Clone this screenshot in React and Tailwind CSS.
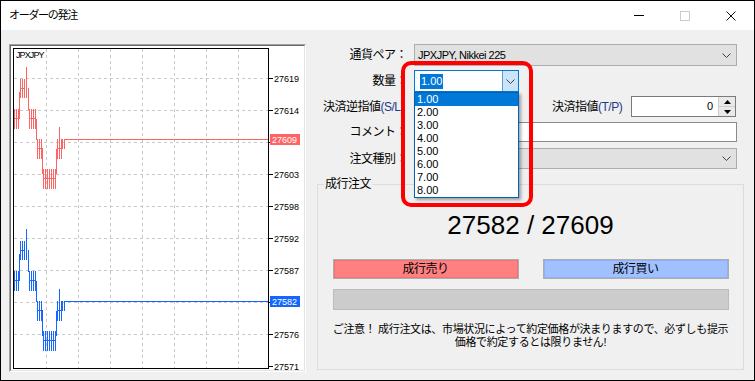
import React from "react";

function buildBars(dy) {
  const d = [];
  const v = (x, y0, y1) => d.push(`M${x + 0.5} ${y0 + dy}V${y1 + dy + 1}`);
  const h = (x0, x1, y) => d.push(`M${x0} ${y + dy + 0.5}H${x1}`);
  const comb = (x0, x1, y0, y1, mid) => {
    for (let x = x0; x <= x1; x += 2) v(x, y0, y1);
    if (mid != null) h(x0, x1 + 1, mid);
  };
  comb(14, 18, 109, 128, 118);
  v(19, 92, 118);
  comb(20, 24, 79, 97, 88);
  v(26, 67, 97);
  v(28, 88, 109);
  comb(29, 35, 109, 128, 118);
  v(36, 119, 139);
  comb(37, 41, 139, 158, 148);
  v(42, 148, 173);
  comb(43, 55, 169, 188, 178);
  v(56, 149, 173);
  comb(57, 61, 139, 158, 148);
  v(59, 127, 148);
  comb(62, 64, 139, 148, null);
  h(64, 269, 139);
  return d.join("");
}

const gridX = [46, 78, 110, 142, 174, 206, 238];
const gridY = [78, 110, 142, 174, 206, 238, 270, 302, 334];
const labels = [
  [78, "27619"],
  [110, "27614"],
  [174, "27603"],
  [206, "27598"],
  [238, "27592"],
  [270, "27587"],
  [334, "27576"],
  [366, "27571"],
];
const ticks = [78, 110, 142, 174, 206, 238, 270, 302, 334, 366];

function Chart() {
  return (
    <svg width="293" height="324" viewBox="11 46 293 324" className="block">
      <rect x="11" y="46" width="293" height="324" fill="#fff" />
      <g stroke="#c8c8c8" strokeDasharray="3 3" shapeRendering="crispEdges">
        {gridX.map((x) => (
          <path key={"gx" + x} d={`M${x + 0.5} 49V368`} />
        ))}
        {gridY.map((y) => (
          <path key={"gy" + y} d={`M14 ${y + 0.5}H268`} />
        ))}
      </g>
      <path d={buildBars(0)} stroke="#ff6464" fill="none" shapeRendering="crispEdges" />
      <path d={buildBars(162)} stroke="#1466ff" fill="none" shapeRendering="crispEdges" />
      <rect x="13.5" y="48.5" width="255" height="320" fill="none" stroke="#000" shapeRendering="crispEdges" />
      <g stroke="#000" shapeRendering="crispEdges">
        {ticks.map((y) => (
          <path key={"t" + y} d={`M269 ${y + 0.5}H273`} />
        ))}
      </g>
      <g fontFamily="'Liberation Sans', sans-serif" fontSize="9" fill="#000">
        {labels.map(([y, t]) => (
          <text key={"l" + y} x="274" y={y + 3.5}>
            {t}
          </text>
        ))}
        <text x="16" y="57.5" letterSpacing="-0.9">
          JPXJPY
        </text>
      </g>
      <rect x="270" y="134" width="30" height="11" fill="#ff6464" />
      <text x="272" y="142.8" fontFamily="'Liberation Sans', sans-serif" fontSize="9" fill="#fff">
        27609
      </text>
      <rect x="270" y="296" width="30" height="11" fill="#1466ff" />
      <text x="272" y="304.8" fontFamily="'Liberation Sans', sans-serif" fontSize="9" fill="#fff">
        27582
      </text>
    </svg>
  );
}

function Chevron() {
  return (
    <svg width="9" height="5" viewBox="0 0 9 5">
      <path d="M0.5 0.5L4.5 4.5L8.5 0.5" fill="none" stroke="#404040" strokeWidth="1" />
    </svg>
  );
}

function Spinner() {
  return (
    <div className="w-[17px] h-full flex flex-col border-l border-[#cfcfcf]">
      <div className="flex-1 flex items-center justify-center bg-[#e9e9e9] border-b border-[#cfcfcf]">
        <svg width="7" height="4" viewBox="0 0 7 4">
          <path d="M0 4L3.5 0L7 4Z" fill="#000" />
        </svg>
      </div>
      <div className="flex-1 flex items-center justify-center bg-[#e9e9e9]">
        <svg width="7" height="4" viewBox="0 0 7 4">
          <path d="M0 0L3.5 4L7 0Z" fill="#000" />
        </svg>
      </div>
    </div>
  );
}

export default function App() {
  const items = ["1.00", "2.00", "3.00", "4.00", "5.00", "6.00", "7.00", "8.00"];
  return (
    <div className="w-[755px] h-[381px] border border-black bg-[#f0f0f0] flex flex-col overflow-hidden font-['Liberation_Sans','Noto_Sans_CJK_JP',sans-serif] text-black">
      {/* Title bar */}
      <div className="h-[29px] shrink-0 bg-white flex items-center">
        <span className="pl-[8px] text-[11px] tracking-[-1.3px] leading-none">オーダーの発注</span>
        <div className="ml-auto flex h-full">
          <div className="w-[46px] flex items-center justify-center">
            <svg width="10" height="1" viewBox="0 0 10 1">
              <path d="M0 0.5H10" stroke="#000" />
            </svg>
          </div>
          <div className="w-[46px] flex items-center justify-center">
            <div className="w-[10px] h-[10px] border border-[#cccccc]" />
          </div>
          <div className="w-[46px] flex items-center justify-center">
            <svg width="10" height="10" viewBox="0 0 10 10">
              <path d="M0.5 0.5L9.5 9.5M9.5 0.5L0.5 9.5" stroke="#111" strokeWidth="1" />
            </svg>
          </div>
        </div>
      </div>

      {/* Body */}
      <div className="flex-1 flex pl-[8px] pt-[14px]">
        {/* Chart panel */}
        <div className="w-[297px] h-[328px] border-t border-l border-[#a0a0a0] border-r-white border-b-white border-r border-b">
          <div className="w-full h-full border-t border-l border-[#696969] border-r border-b border-r-[#e3e3e3] border-b-[#e3e3e3] bg-white">
            <Chart />
          </div>
        </div>

        {/* Form */}
        <div className="relative flex-1 flex flex-col text-[12px]">
          {/* Row 1 */}
          <div className="flex items-center h-[22px]">
            <div className="w-[101px] text-right tracking-[-0.5px] whitespace-nowrap">通貨ペア：</div>
            <div className="ml-[7px] w-[323px] h-[22px] bg-[#e1e1e1] border border-[#adadad] flex items-center pl-[3px] pr-[5px]">
              <span className="text-[11px] tracking-[-0.5px]">JPXJPY, Nikkei 225</span>
              <span className="ml-auto flex">
                <Chevron />
              </span>
            </div>
          </div>
          {/* Row 2 */}
          <div className="flex items-center h-[22px] mt-[4px]">
            <div className="w-[101px] text-right tracking-[-0.5px] whitespace-nowrap">数量：</div>
            <div className="ml-[7px] w-[105px] h-[22px] bg-white border border-[#0078d7] flex">
              <div className="flex-1 flex items-center pl-[5px]">
                <span className="bg-[#0078d7] text-white text-[11px] leading-[15px] px-[1px]">1.00</span>
              </div>
              <div className="w-[16px] h-full bg-[#cce4f7] border-l border-[#569de5] flex items-center justify-center">
                <Chevron />
              </div>
            </div>
          </div>
          {/* Row 3 */}
          <div className="flex items-center h-[21px] mt-[4px]">
            <div className="w-[101px] whitespace-nowrap pl-[17px] tracking-[-0.5px]">
              決済逆指値<span className="text-[#1d3a8a]">(S/L)</span>
            </div>
            <div className="ml-[7px] w-[105px] h-[21px] bg-white border border-[#7a7a7a] flex">
              <div className="flex-1 flex items-center justify-end pr-[5px] text-[11px]">0</div>
              <Spinner />
            </div>
            <div className="ml-[33px] w-[79px] whitespace-nowrap tracking-[-0.5px]">
              決済指値<span className="text-[#1d3a8a]">(T/P)</span>
            </div>
            <div className="w-[105px] h-[21px] bg-white border border-[#7a7a7a] flex">
              <div className="flex-1 flex items-center justify-end pr-[5px] text-[11px]">0</div>
              <Spinner />
            </div>
          </div>
          {/* Row 4 */}
          <div className="flex items-center h-[20px] mt-[5px]">
            <div className="w-[101px] text-right tracking-[-0.5px] whitespace-nowrap">コメント：</div>
            <div className="ml-[7px] w-[323px] h-[20px] bg-white border border-[#8a8a8a]" />
          </div>
          {/* Row 5 */}
          <div className="flex items-center h-[21px] mt-[6px]">
            <div className="w-[101px] text-right tracking-[-0.5px] whitespace-nowrap">注文種別：</div>
            <div className="ml-[7px] w-[323px] h-[21px] bg-[#e1e1e1] border border-[#adadad] flex items-center pr-[5px]">
              <span className="ml-auto flex">
                <Chevron />
              </span>
            </div>
          </div>

          {/* Group box */}
          <div className="relative ml-[11px] mt-[15px] w-[427px] h-[186px] border border-[#dcdcdc] flex flex-col items-center">
            <span className="absolute left-[6px] top-[-8px] px-[1px] bg-[#f0f0f0] leading-[14px] tracking-[-0.5px]">成行注文</span>
            <div className="mt-[27px] text-[26px] leading-none">27582 / 27609</div>
            <div className="mt-[21px] flex gap-[24px]">
              <div className="w-[186px] h-[20px] border border-[#adadad] bg-[#ff8080] shadow-[inset_0_0_0_1px_#f07272] flex items-center justify-center tracking-[-0.5px]">
                成行売り
              </div>
              <div className="w-[186px] h-[20px] border border-[#adadad] bg-[#a0c0ff] shadow-[inset_0_0_0_1px_#8fb0f5] flex items-center justify-center tracking-[-0.5px]">
                成行買い
              </div>
            </div>
            <div className="mt-[10px] w-[396px] h-[21px] bg-[#cccccc] border border-[#bcbcbc]" />
            <div className="mt-[13px] text-center text-[11px] leading-[13px] tracking-[-0.35px] whitespace-nowrap">
              ご注意！ 成行注文は、市場状況によって約定価格が決まりますので、必ずしも提示
              <br />
              価格で約定するとは限りません!
            </div>
          </div>

          {/* Dropdown list overlay */}
          <div className="absolute left-[108px] top-[48px] w-[105px] bg-white border border-[#0064b4] shadow-[2px_2px_3px_rgba(0,0,0,0.35)] text-[11px]">
            {items.map((it, i) =>
              i === 0 ? (
                <div key={it} className="h-[13px] leading-[13px] pl-[2px] bg-[#0078d7] text-white">
                  {it}
                </div>
              ) : (
                <div key={it} className="h-[13px] leading-[13px] pl-[2px]">
                  {it}
                </div>
              )
            )}
          </div>

          {/* Red annotation */}
          <div className="absolute left-[95px] top-[17px] w-[132px] h-[146px] border-[4px] border-[#ff0000] rounded-[10px] pointer-events-none" />
        </div>
      </div>
    </div>
  );
}
